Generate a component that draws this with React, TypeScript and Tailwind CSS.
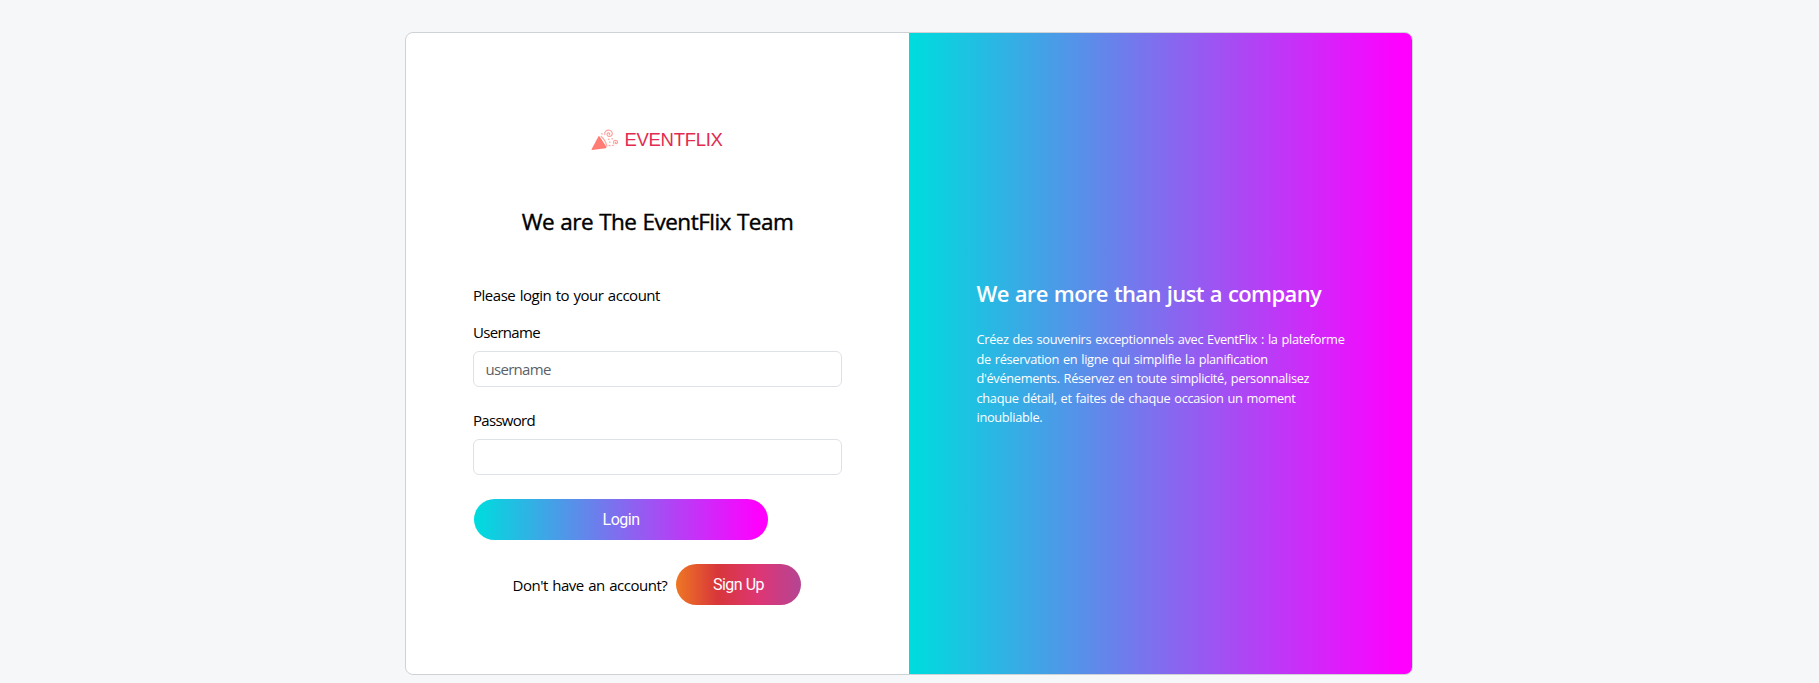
import type { ReactNode } from "react";

function Logo() {
  return (
    <div className="flex items-center justify-center gap-[5px] pr-px">
      <svg className="h-[22px] w-[28px]" viewBox="0 0 28 22" fill="none" aria-hidden="true">
        <path d="M8.4 7.2 15.4 17.8Q15.8 19 14.6 19.3L1 21Q.3 20.9.6 20.2L7.4 7.4Q7.9 6.6 8.4 7.2Z" fill="#ff7b74" />
        <path d="M10.2 7.4Q14.5 11 16 17.2" stroke="#ffaaa5" strokeWidth="1.3" strokeLinecap="round" />
        <path d="M13.8 5.6C13 2.8 15.8.8 18.4 1.2 21.8 1.8 22.4 6 19.4 7.2 16.4 8.2 14.8 4.6 17.2 3.9 18.6 3.6 19.2 5 18.3 5.6" stroke="#ffa09b" strokeWidth="1.1" strokeLinecap="round" />
        <path d="M23 14.8C21.8 13 23 11.2 24.7 11.2 27.2 11.4 27.2 14.8 25.1 14.6 24 14.3 24.3 13 25.1 13" stroke="#ffa09b" strokeWidth="1.1" strokeLinecap="round" />
        <path d="M10.5 4.9h.8M17.5 10.4l.6-.2M20.9 9.6l.5.3M18.5 13.2h.6M18 16.5l1.1.2M21.5 16.4h.7" stroke="#ffaaa5" strokeWidth="1.3" strokeLinecap="round" />
      </svg>
      <span className="text-[18.5px] leading-6 tracking-[-0.3px] text-[#e22b4f]">EVENTFLIX</span>
    </div>
  );
}

function Field({ id, label, type, placeholder, className }: { id: string; label: string; type: string; placeholder?: string; className: string }) {
  return (
    <div className={`flex flex-col ${className}`}>
      <label htmlFor={id} className="mb-[7px] text-[15px] leading-6 tracking-[-0.7px]">{label}</label>
      <input
        id={id}
        type={type}
        placeholder={placeholder}
        className="h-[36px] rounded-[6px] border border-[#dee2e6] bg-white px-[11.5px] text-[15px] tracking-[-0.7px] placeholder:text-[#5b6167]"
      />
    </div>
  );
}

function Pill({ className, children }: { className: string; children: ReactNode }) {
  return (
    <button type="button" className={`h-[41px] rounded-full font-[Roboto,sans-serif] text-[16px] tracking-[-0.5px] text-white ${className}`}>
      {children}
    </button>
  );
}

export default function App() {
  return (
    <main className="flex h-[683px] justify-center overflow-hidden bg-[#f5f7f9] pt-8 pr-px font-['Open_Sans','Noto_Sans',sans-serif] text-black">
      <section className="flex h-[643px] w-[1008px] overflow-hidden rounded-[8px] border border-[#cfd2d5] bg-white">
        <div className="flex w-[503px] flex-col px-[67px]">
          <div className="mt-[95px] font-['Liberation_Sans',sans-serif]"><Logo /></div>
          <h1 className="mt-[56px] text-center text-[22.5px] leading-7 tracking-[-0.52px] [word-spacing:0.8px] whitespace-nowrap [-webkit-text-stroke:0.4px_black]">We are The EventFlix Team</h1>
          <form className="mt-[47px] flex flex-col">
            <p className="mb-[13px] text-[15px] leading-6 tracking-[-0.48px] [word-spacing:1px] whitespace-nowrap">Please login to your account</p>
            <Field id="username" label="Username" type="text" placeholder="username" className="mb-[21px]" />
            <Field id="password" label="Password" type="password" className="mb-6" />
            <Pill className="ml-px w-[294px] bg-[linear-gradient(90deg,#00dbde_1%,#ff00ff_97%)]">Login</Pill>
            <div className="mt-6 flex items-center pl-[39.5px]">
              <p className="w-[163.5px] text-[15px] leading-6 tracking-[-0.48px] [word-spacing:1px] whitespace-nowrap">Don't have an account?</p>
              <Pill className="w-[125px] bg-[linear-gradient(to_right,#ee7724,#d8363a,#dd3675,#b44593)]">Sign Up</Pill>
            </div>
          </form>
        </div>
        <div className="flex flex-1 flex-col bg-[linear-gradient(90deg,#00dbde_1%,#ff00ff_98%)] pl-[67.5px] text-white">
          <h2 className="mt-[246px] text-[22px] leading-7 font-semibold tracking-[-0.62px] [word-spacing:0.9px] whitespace-nowrap">We are more than just a company</h2>
          <p className="mt-[23px] text-[12.8px] leading-[19.6px] tracking-[-0.32px] [word-spacing:0.9px] whitespace-nowrap">
            Créez des souvenirs exceptionnels avec EventFlix : la plateforme<br />
            de réservation en ligne qui simplifie la planification<br />
            d'événements. Réservez en toute simplicité, personnalisez<br />
            chaque détail, et faites de chaque occasion un moment<br />
            inoubliable.
          </p>
        </div>
      </section>
    </main>
  );
}
